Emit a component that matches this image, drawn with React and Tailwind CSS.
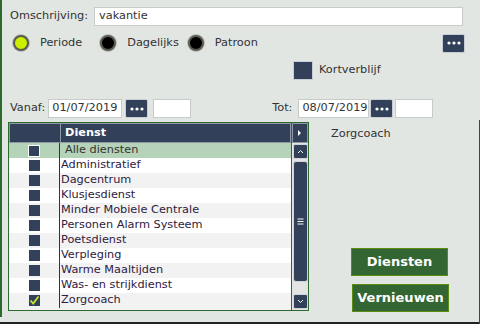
import React from "react";

const font = { fontFamily: '"DejaVu Sans", Verdana, sans-serif' };

function Dots() {
  return (
    <svg width="14" height="4" viewBox="0 0 14 4">
      <circle cx="2" cy="2" r="1.6" fill="#fff" />
      <circle cx="7" cy="2" r="1.6" fill="#fff" />
      <circle cx="12" cy="2" r="1.6" fill="#fff" />
    </svg>
  );
}

function DotBtn({ cls = "" }) {
  return (
    <div className={"w-[23px] h-[19px] bg-[#334059] rounded-[2px] border border-[#c9ced6] flex items-center justify-center " + cls}>
      <Dots />
    </div>
  );
}

function Radio({ on, label, cls = "" }) {
  return (
    <div className={"flex items-center " + cls}>
      <div className={"w-[16px] h-[16px] rounded-full border-2 border-[#5a5a50] shadow-[0_0_0_1px_#b8bcb4] " + (on ? "bg-[#ccee00]" : "bg-black")} />
      <span className="ml-[11px] text-[11.3px] text-[#333]">{label}</span>
    </div>
  );
}

const rows = [
  "Administratief",
  "Dagcentrum",
  "Klusjesdienst",
  "Minder Mobiele Centrale",
  "Personen Alarm Systeem",
  "Poetsdienst",
  "Verpleging",
  "Warme Maaltijden",
  "Was- en strijkdienst",
  "Zorgcoach",
];

export default function App() {
  return (
    <div style={font} className="w-[480px] h-[324px] bg-[#e1e6e3] relative overflow-hidden text-[#333]">
      <div className="h-[317px] border-l-2 border-[#2d6a2d] flex flex-col">
        {/* row 1 */}
        <div className="flex items-center mt-[7px] ml-[8px]">
          <span className="text-[11.3px]">Omschrijving:</span>
          <div className="ml-[6px] w-[369px] h-[19px] bg-white border border-[#c8ccc8] flex items-center pl-[4px] text-[11.3px]">vakantie</div>
        </div>
        {/* row 2 radios */}
        <div className="flex items-center mt-[8px] ml-[11px] h-[18px]">
          <Radio on label="Periode" />
          <Radio label="Dagelijks" cls="ml-[18px]" />
          <Radio label="Patroon" cls="ml-[9px]" />
          <DotBtn cls="ml-auto mr-[15px]" />
        </div>
        {/* row 3 */}
        <div className="flex items-center mt-[9px] ml-[291px] h-[19px]">
          <div className="w-[20px] h-[19px] bg-[#334059] border border-[#c9ced6] rounded-[1px]" />
          <span className="ml-[6px] text-[11.3px]">Kortverblijf</span>
        </div>
        {/* row 4 */}
        <div className="flex items-center mt-[19px] ml-[8px] h-[19px]">
          <span className="text-[11.3px]">Vanaf:</span>
          <div className="ml-[3px] w-[74px] h-[19px] bg-white border border-[#c8ccc8] flex items-center pl-[3px] text-[11.3px]">01/07/2019</div>
          <DotBtn cls="ml-[3px]" />
          <div className="ml-[5px] w-[38px] h-[19px] bg-white border border-[#c8ccc8]" />
          <span className="ml-[81px] text-[11.3px]">Tot:</span>
          <div className="ml-[6px] w-[71px] h-[19px] bg-white border border-[#c8ccc8] flex items-center pl-[3px] text-[11.3px]">08/07/2019</div>
          <DotBtn cls="ml-[1px]" />
          <div className="ml-[2px] w-[38px] h-[19px] bg-white border border-[#c8ccc8]" />
        </div>
        {/* table + side */}
        <div className="flex mt-[4px]">
          <div className="ml-[6px] w-[301px] h-[189px] border border-[#2d6a2d] flex bg-[#f2f2f2]">
            <div className="w-[282px] flex flex-col">
              <div className="flex h-[20px] bg-[#334059]">
                <div className="w-[51px] border border-[#8f98a6] border-r-0" />
                <div className="flex-1 border border-[#8f98a6] flex items-center pl-[4px] text-[11.3px] font-bold text-white">Dienst</div>
              </div>
              <div className="flex h-[15px] bg-[#b5d3b8]">
                <div className="w-[51px] flex items-center justify-center border-r border-[#2a3a2a]">
                  <div className="w-[12px] h-[12px] bg-[#334059] border border-white" />
                </div>
                <div className="flex-1 flex items-center pl-[5px] text-[11.3px]">Alle diensten</div>
              </div>
              {rows.map((r, i) => (
                <div key={r} className={"flex h-[15px] " + (i % 2 === 0 ? "bg-white" : "bg-[#f2f2f2]")}>
                  <div className="w-[51px] flex items-center justify-center border-r border-[#2a3a2a]">
                    <div className="w-[11px] h-[11px] bg-[#334059] flex items-center justify-center">
                      {r === "Zorgcoach" && (
                        <svg width="11" height="11" viewBox="0 0 11 11">
                          <path d="M1.5 5.5 L4.2 8.5 L9.5 1.5" stroke="#c6e62a" strokeWidth="1.8" fill="none" />
                        </svg>
                      )}
                    </div>
                  </div>
                  <div className="flex-1 flex items-center pl-[1px] text-[11.3px] text-[#2e2040]">{r}</div>
                </div>
              ))}
            </div>
            <div className="flex-1 flex flex-col items-center bg-[#e4e4e4] border-l border-[#2d6a2d]">
              <div className="w-full h-[20px] bg-[#334059] border border-[#8f98a6] flex items-center justify-center">
                <svg width="6" height="8" viewBox="0 0 6 8"><path d="M1 1 L4 4 L1 7 Z" fill="#fff" /></svg>
              </div>
              <div className="mt-[1px] w-[15px] h-[15px] bg-[#334059] rounded-[2px] border border-[#d0d4da] flex items-center justify-center">
                <svg width="7" height="5" viewBox="0 0 7 5"><path d="M1 4 L3.5 1.5 L6 4" stroke="#fff" strokeWidth="1" fill="none" /></svg>
              </div>
              <div className="mt-[2px] w-[15px] h-[121px] bg-[#334059] rounded-[3px] border border-[#d0d4da] flex items-center justify-center">
                <svg width="7" height="7" viewBox="0 0 7 7">
                  <path d="M0.5 1 H6.5 M0.5 3.5 H6.5 M0.5 6 H6.5" stroke="#fff" strokeWidth="1" />
                </svg>
              </div>
              <div className="mt-auto mb-[1px] w-[15px] h-[15px] bg-[#334059] rounded-[2px] border border-[#d0d4da] flex items-center justify-center">
                <svg width="7" height="5" viewBox="0 0 7 5"><path d="M1 1 L3.5 3.5 L6 1" stroke="#fff" strokeWidth="1" fill="none" /></svg>
              </div>
            </div>
          </div>
          <div className="flex-1 flex flex-col">
            <span className="ml-[22px] mt-[4px] text-[11.3px]">Zorgcoach</span>
            <div className="mt-auto flex flex-col items-start ml-[42px] mb-[-1px]">
              <div className="w-[97px] h-[28px] bg-[#336633] border border-[#5a8a10] flex items-center justify-center text-white font-bold text-[13px]">Diensten</div>
              <div className="mt-[8px] ml-[1px] w-[97px] h-[28px] bg-[#336633] border border-[#5a8a10] flex items-center justify-center text-white font-bold text-[13px]">Vernieuwen</div>
            </div>
          </div>
        </div>
      </div>
      <div className="absolute left-0 right-0 bottom-0 h-[2px] bg-[#222]" />
      <div className="absolute right-0 top-[120px] bottom-0 w-[1px] bg-[#444]" />
    </div>
  );
}
